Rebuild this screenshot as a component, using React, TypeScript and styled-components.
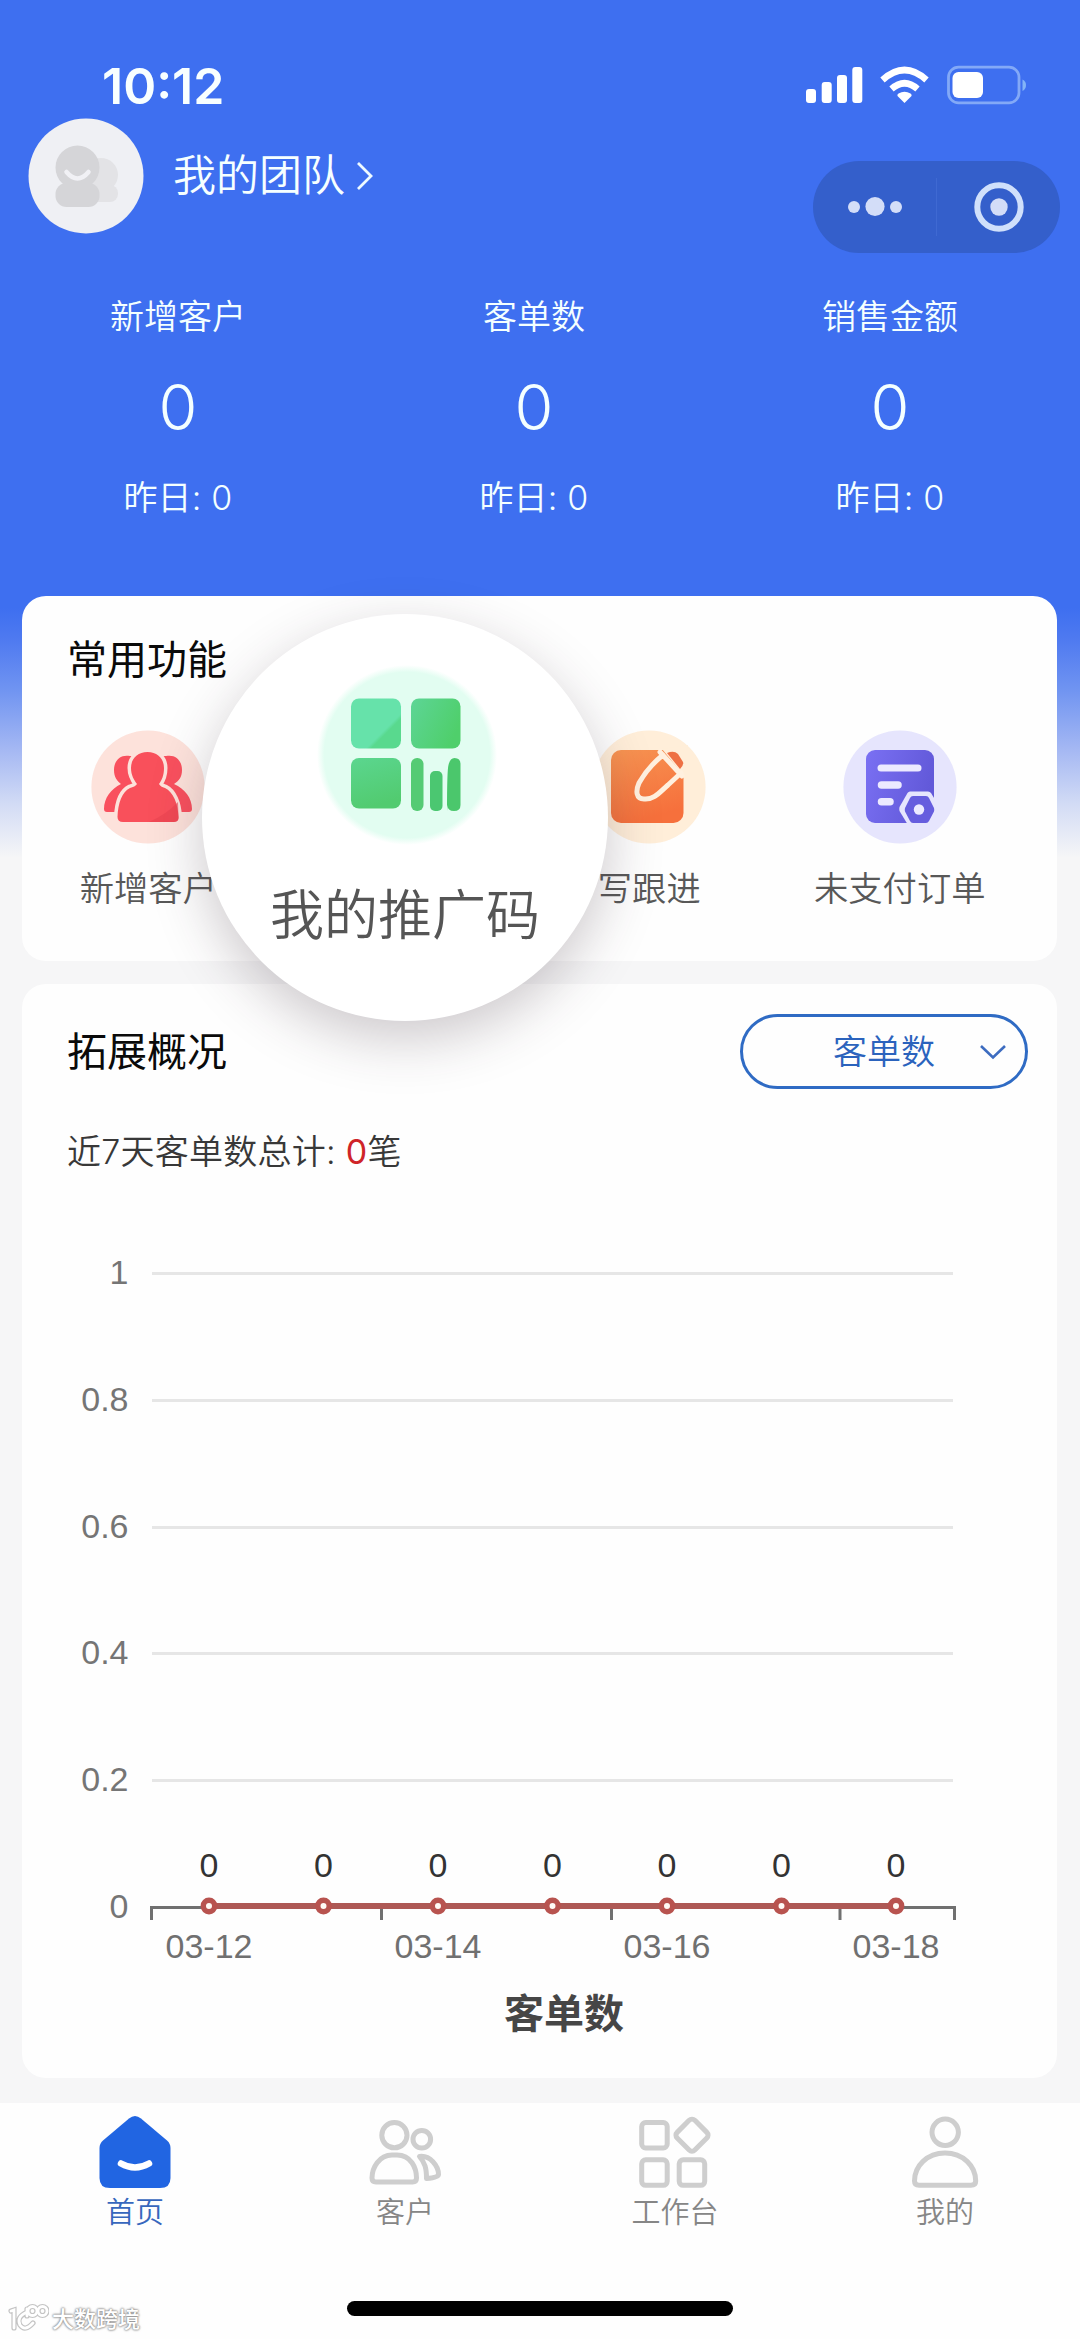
import React from "react";
import styled, { createGlobalStyle } from "styled-components";

const GlobalStyle = createGlobalStyle`
  * { box-sizing: border-box; }
  body {
    margin: 0;
    font-family: Inter, "Noto Sans CJK SC", sans-serif;
    -webkit-font-smoothing: antialiased;
  }
  svg { display: block; }
`;

const Page = styled.div`
  position: relative;
  display: flex;
  flex-direction: column;
  width: 1080px;
  height: 2339px;
  overflow: hidden;
  background: linear-gradient(
    to bottom,
    #3e6ff0 0,
    #3e6ff0 608px,
    #4f7af0 640px,
    #7094f1 690px,
    #a5b8f3 750px,
    #d3dcf5 805px,
    #f6f6f7 858px
  );
`;

const StatusBar = styled.div`
  display: flex;
  flex: none;
  justify-content: space-between;
  align-items: center;
  height: 118px;
  padding: 52px 54px 0 102px;
`;

const Clock = styled.span`
  padding-top: 2px;
  color: #f8ffff;
  font-size: 50px;
  font-weight: 600;
  line-height: 64px;
`;

const NavRow = styled.div`
  display: flex;
  flex: none;
  height: 161px;
  padding: 0 20px 0 28px;
`;

const TeamLink = styled.div`
  display: flex;
  align-items: center;
  height: 116px;
`;

const TeamName = styled.span`
  margin: 0 11px 2px 29px;
  color: #f6ffff;
  font-size: 43px;
  font-weight: 350;
  line-height: 60px;
`;

const Capsule = styled.div`
  display: flex;
  align-items: center;
  width: 247px;
  height: 92px;
  margin: 43px 0 0 auto;
  border-radius: 46px;
  background: #345fcb;
`;

const CapsuleButton = styled.div<{ $width: number }>`
  display: flex;
  justify-content: center;
  width: ${(p) => p.$width}px;
`;

const CapsuleDivider = styled.div`
  width: 1px;
  height: 58px;
  background: #3f69d2;
`;

const Stats = styled.div`
  display: grid;
  flex: none;
  grid-template-columns: repeat(3, 1fr);
  height: 317px;
  padding: 11px 12px 0 0;
  color: #f4ffff;
  text-align: center;
  font-weight: 350;
`;

const StatLabel = styled.div`
  font-size: 34px;
  line-height: 54px;
`;

const StatValue = styled.div`
  margin-top: 25px;
  font-size: 63px;
  line-height: 76px;
`;

const StatNote = styled.div`
  margin-top: 26px;
  font-size: 34px;
  line-height: 54px;
  letter-spacing: 0.2px;
  white-space: pre;
`;

const Card = styled.section<{ $height: number }>`
  position: relative;
  flex: none;
  width: 1035px;
  height: ${(p) => p.$height}px;
  margin: 0 0 23px 22px;
  border-radius: 24px;
  background: #fefefe;
`;

const CardTitle = styled.h2`
  margin: 0;
  color: #0a0a0a;
  font-size: 40px;
  font-weight: 400;
  line-height: 56px;
`;

const ShortcutHeader = styled.div`
  padding: 36px 0 0 45px;
`;

const Shortcuts = styled.div`
  display: grid;
  grid-template-columns: repeat(4, 250.5px);
  margin-top: 42px;
  padding-left: 1px;
`;

const Shortcut = styled.div`
  display: flex;
  flex-direction: column;
  align-items: center;
`;

const ShortcutLabel = styled.span`
  margin-top: 18px;
  color: #585858;
  font-size: 34.3px;
  font-weight: 350;
  line-height: 54px;
  white-space: nowrap;
`;

const Spotlight = styled.div`
  position: absolute;
  left: 180px;
  top: 18px;
  z-index: 2;
  display: flex;
  flex-direction: column;
  align-items: center;
  width: 406px;
  height: 407px;
  padding-top: 51px;
  border-radius: 50%;
  background: #fff;
  box-shadow: 0 18px 54px rgba(58, 44, 54, 0.25);
`;

const PromoIconSlot = styled.div`
  padding-left: 4px;
`;

const SpotlightLabel = styled.span`
  margin-top: 33px;
  color: #555;
  font-size: 54px;
  font-weight: 350;
  line-height: 76px;
`;

const OverviewHeader = styled.div`
  display: flex;
  justify-content: space-between;
  align-items: center;
  padding: 30px 29px 0 45px;
`;

const Select = styled.div`
  display: flex;
  align-items: center;
  justify-content: flex-end;
  width: 288px;
  height: 75px;
  padding-right: 18px;
  border: 3px solid #2f6bc4;
  border-radius: 38px;
  color: #2b63bd;
  font-size: 34px;
  font-weight: 350;
  line-height: 54px;
`;

const SelectText = styled.span`
  margin-right: 44px;
`;

const Summary = styled.p`
  margin: 36px 0 0 45px;
  color: #383838;
  font-size: 34px;
  font-weight: 350;
  line-height: 54px;
  letter-spacing: 0.25px;
`;

const SummaryValue = styled.b`
  color: #cf2428;
  font-weight: 400;
`;

const ChartSvg = styled.svg`
  margin-top: 42px;
`;

const TabBar = styled.nav`
  display: grid;
  grid-template-columns: repeat(4, 1fr);
  flex: none;
  height: 236px;
  margin-top: 2px;
  background: #fefefe;
`;

const Tab = styled.div<{ $active?: boolean }>`
  display: flex;
  flex-direction: column;
  align-items: center;
  gap: 2px;
  padding-top: 11px;
  color: ${(p) => (p.$active ? "#3767bd" : "#868686")};
  font-size: 29px;
  font-weight: 350;
  line-height: 42px;
`;

const HomeIndicator = styled.div`
  position: absolute;
  left: 347px;
  top: 2301px;
  width: 386px;
  height: 15px;
  border-radius: 8px;
  background: #000;
`;

const Watermark = styled.div`
  position: absolute;
  left: 8px;
  top: 2303px;
  display: flex;
  align-items: center;
  gap: 3px;
  height: 32px;
  color: #fff;
  font-size: 22px;
  font-weight: 500;
  line-height: 32px;
  text-shadow: 0 0 2px #888, 0 0 2px #999, 0 0 3px #aaa;
`;

const AvatarIcon = () => (
  <svg width="116" height="116" viewBox="0 0 116 116">
    <circle cx="58" cy="58" r="57.5" fill="#eff0f4" />
    <g fill="#e3e3e6">
      <circle cx="73" cy="57" r="17" />
      <rect x="50" y="67" width="40" height="17" rx="8" />
    </g>
    <g fill="#d5d5d8">
      <circle cx="49.500" cy="49.500" r="22" />
      <rect x="27.500" y="65" width="44" height="24" rx="11" />
    </g>
    <path d="M38.500 54Q49.500 67 60.500 54" fill="none" stroke="#f1f1f5" strokeWidth="4.500" strokeLinecap="round" />
  </svg>
);

const StatusIcons = () => (
  <svg width="222" height="42" viewBox="804 64 222 42">
    <g fill="#fff">
      <rect x="806" y="89" width="10" height="14" rx="3" />
      <rect x="821.700" y="82" width="10" height="21" rx="3" />
      <rect x="837" y="75" width="10" height="28" rx="3" />
      <rect x="852.300" y="67" width="10" height="36" rx="3" />
      <path d="M904.500 103L897.500 96Q896.800 94.800 898.500 93.500Q904.500 89.800 910.500 93.500Q912.200 94.800 911.500 96Z" />
    </g>
    <g fill="none" stroke="#fff" strokeWidth="6.500">
      <path d="M882.500 80Q904.500 60 926.500 80" />
      <path d="M891.500 89Q904.500 77.500 917.500 89" />
    </g>
    <rect x="948.500" y="67.200" width="70.500" height="35.600" rx="10" fill="none" stroke="#83a9f7" strokeWidth="2.800" />
    <rect x="952.500" y="72" width="30.500" height="26" rx="6" fill="#fff" />
    <path d="M1022.500 79.500Q1026 81 1026 85T1022.500 91Z" fill="#83b4f7" />
  </svg>
);

const ChevronRight = () => (
  <svg width="18" height="30" viewBox="0 0 18 30">
    <path d="M2 2L15 15L2 28" fill="none" stroke="#eefaff" strokeWidth="2.800" />
  </svg>
);

const DotsIcon = () => (
  <svg width="56" height="24" viewBox="0 0 56 24" fill="#d3ddf8">
    <circle cx="7" cy="12" r="6" />
    <circle cx="28" cy="11.500" r="9.600" />
    <circle cx="49" cy="12" r="6" />
  </svg>
);

const TargetIcon = () => (
  <svg width="52" height="52" viewBox="0 0 52 52">
    <circle cx="26" cy="26" r="21.700" fill="none" stroke="#d0e0fb" strokeWidth="6" />
    <circle cx="26" cy="26" r="8.700" fill="#d3ddf8" />
  </svg>
);

const PeopleIcon = () => (
  <svg width="114" height="114" viewBox="92 730 114 114">
    <circle cx="149" cy="787" r="56.600" fill="#fde2db" />
    <g fill="#f9505e">
      <path d="M131 756C121 754 115 761 115 770C115 777 118 781 122 784C112 789 105 798 105 809Q105 812 108 812H150V757Z" />
      <path d="M167 756C177 754 183 761 183 770C183 777 180 781 175 784C186 789 193 798 193 809Q193 812 190 812H148V757Z" />
    </g>
    <path
      d="M148.500 752C138 752 132 759 132 768C132 775 135 780 138 784C137 786 134 787 131 788C123 792 119 803 118.500 817Q118.500 822 124 822H175Q180 822 179.500 817C179 803 174 792 166 788C163 787 161 786 160 784C163 780 165 775 165 768C165 759 159 752 148.500 752Z"
      fill="#f9505b"
      stroke="#fde2db"
      strokeWidth="7"
      paintOrder="stroke"
    />
    <path d="M150 822Q168 814 179 802L179.500 817Q180 822 175 822Z" fill="#e94250" opacity="0.600" />
  </svg>
);

const NoteIcon = () => (
  <svg width="114" height="114" viewBox="594 730 114 114">
    <defs>
      <linearGradient id="note" x1="0" y1="0" x2="0.300" y2="1">
        <stop offset="0" stopColor="#f79452" />
        <stop offset="1" stopColor="#f6703c" />
      </linearGradient>
    </defs>
    <circle cx="651" cy="787" r="56.600" fill="#ffeed9" />
    <rect x="613" y="750" width="72.500" height="73" rx="10" fill="url(#note)" />
    <path d="M664 749L686 776L690 745Z" fill="#ffeed9" />
    <path d="M669 753Q676 750 680 754L685 762Q686 765 682 769Z" fill="#ee7044" />
    <path
      d="M665 755C655 763 646 774 641 783C637.500 791 638 799 646 799C656 800 662 792 670 785L683 773M662 752L684 776"
      fill="none"
      stroke="#fff0df"
      strokeWidth="5"
      strokeLinecap="round"
    />
  </svg>
);

const OrderIcon = () => (
  <svg width="114" height="114" viewBox="843 730 114 114">
    <defs>
      <linearGradient id="order" x1="0" y1="0" x2="1" y2="0.300">
        <stop offset="0" stopColor="#7a70f3" />
        <stop offset="1" stopColor="#6259d9" />
      </linearGradient>
    </defs>
    <circle cx="900" cy="787" r="56.600" fill="#e6e5fd" />
    <rect x="866" y="750" width="68" height="73" rx="9" fill="url(#order)" />
    <g stroke="#eceaff" strokeLinecap="round">
      <path d="M881 768H918" strokeWidth="7" />
      <path d="M881.500 785H898" strokeWidth="7.500" />
      <path d="M881.500 801.700H890" strokeWidth="7.500" />
    </g>
    <path
      d="M910 791.500H928Q930 791.500 931 793L939.500 807Q940 809 939.500 811L931 825H908L899.500 811Q899 809 899.500 807L907.500 793Q908.500 791.500 910 791.500Z"
      fill="#e6e5fd"
    />
    <path
      d="M913 796H926Q928 796 929 798L934 808Q934.500 810 934 811.500L929 821Q928 823 926 823H913Q911 823 910 821L905 811.500Q904.500 810 905 808L910 798Q911 796 913 796Z"
      fill="#665dde"
    />
    <circle cx="919" cy="809.500" r="5.200" fill="#eceaff" />
  </svg>
);

const PromoCodeIcon = () => (
  <svg width="180" height="180" viewBox="318 665 180 180">
    <defs>
      <linearGradient id="tileA" x1="0" y1="0" x2="1" y2="1">
        <stop offset="0.650" stopColor="#66e2aa" />
        <stop offset="0.700" stopColor="#59d98e" />
      </linearGradient>
      <linearGradient id="tileB" x1="0" y1="0" x2="1" y2="0.500">
        <stop offset="0" stopColor="#5dd596" />
        <stop offset="1" stopColor="#4fcf6b" />
      </linearGradient>
      <linearGradient id="tileC" x1="0" y1="0" x2="0.300" y2="1">
        <stop offset="0" stopColor="#5bd68f" />
        <stop offset="1" stopColor="#52cb70" />
      </linearGradient>
      <radialGradient id="halo">
        <stop offset="0.920" stopColor="#e2fdf1" />
        <stop offset="1" stopColor="#e2fdf1" stopOpacity="0" />
      </radialGradient>
    </defs>
    <circle cx="408" cy="755" r="90" fill="url(#halo)" />
    <rect x="352" y="698.500" width="50" height="50" rx="8" fill="url(#tileA)" />
    <rect x="412" y="698.500" width="49.500" height="50" rx="8" fill="url(#tileB)" />
    <rect x="352" y="758" width="50" height="50.500" rx="8" fill="url(#tileC)" />
    <rect x="412" y="758" width="12.500" height="53" rx="6" fill="#55cb74" />
    <rect x="431" y="771" width="12.500" height="40" rx="5" fill="#4bc771" />
    <path d="M448 811Q448 770 449.500 765Q451 758 455.500 758Q461.500 758 461.500 764V805Q461.500 811 455 811T448.500 805Z" fill="#4bc76c" />
  </svg>
);

const HomeIcon = () => (
  <svg width="76" height="76" viewBox="97 2114 76 76">
    <path
      d="M129 2118.500Q135 2113.500 141 2118.500L167 2140.500Q170.500 2143.500 170.500 2148V2178Q170.500 2188 160 2188H110Q99.500 2188 99.500 2178V2148Q99.500 2143.500 103 2140.500Z"
      fill="#2165e2"
    />
    <path d="M121 2163.500Q135 2171.500 149 2163.500" fill="none" stroke="#fff" strokeWidth="6.500" strokeLinecap="round" />
  </svg>
);

const CustomersIcon = () => (
  <svg width="76" height="76" viewBox="367 2114 76 76" fill="none" stroke="#cecece" strokeWidth="5" strokeLinejoin="round">
    <circle cx="394.400" cy="2135.200" r="12.600" />
    <circle cx="421.800" cy="2139.300" r="8.800" />
    <path d="M392 2155H397C411 2155 416.500 2168 416.500 2178Q416.500 2182 412.500 2182H376Q372 2182 372 2178C372 2168 379 2155 392 2155Z" />
    <path d="M419.500 2156.500C430 2155 438.500 2166 438.500 2174.500Q438.500 2177.500 426.500 2178.500C426.500 2168 425 2163 419.500 2156.500Z" />
  </svg>
);

const WorkbenchIcon = () => (
  <svg width="76" height="76" viewBox="637 2114 76 76" fill="none" stroke="#cecece" strokeWidth="5">
    <rect x="641.700" y="2122.500" width="25.500" height="25.500" rx="4" />
    <rect x="641.700" y="2159.800" width="25.500" height="25.500" rx="4" />
    <rect x="679.200" y="2159.800" width="25.500" height="25.500" rx="4" />
    <rect x="679.500" y="2122.700" width="25" height="25" rx="4" transform="rotate(45 692 2135.200)" />
  </svg>
);

const MeIcon = () => (
  <svg width="76" height="76" viewBox="907 2114 76 76" fill="none" stroke="#cecece" strokeWidth="5" strokeLinejoin="round">
    <circle cx="945.200" cy="2132.300" r="13.200" />
    <path d="M945 2153C963 2153 975.700 2166 975.700 2181Q975.700 2185.300 971 2185.300H919Q914.500 2185.300 914.500 2181C914.500 2166 927 2153 945 2153Z" />
  </svg>
);

const WatermarkLogo = () => (
  <svg width="41" height="32" viewBox="0 0 41 32" fill="none" strokeLinecap="round">
    {[
      { color: "#c4c4c4", width: 5.2 },
      { color: "#ffffff", width: 2.8 },
    ].map((s) => (
      <g key={s.color} stroke={s.color} strokeWidth={s.width}>
        <path d="M3 8L6 7V25M19 9Q8 14 12 22Q17 29 25 20M19 6V13" />
        <circle cx="24.500" cy="8" r="4.500" />
        <circle cx="34.500" cy="8" r="4.500" />
      </g>
    ))}
  </svg>
);

const stats = ["新增客户", "客单数", "销售金额"];

const shortcuts = [
  { label: "新增客户", icon: <PeopleIcon /> },
  null,
  { label: "写跟进", icon: <NoteIcon /> },
  { label: "未支付订单", icon: <OrderIcon /> },
];

const tabs = [
  { label: "首页", icon: <HomeIcon /> },
  { label: "客户", icon: <CustomersIcon /> },
  { label: "工作台", icon: <WorkbenchIcon /> },
  { label: "我的", icon: <MeIcon /> },
];

const yLabels = ["1", "0.8", "0.6", "0.4", "0.2", "0"];
const days = ["03-12", "03-13", "03-14", "03-15", "03-16", "03-17", "03-18"];
const rowY = (i: number) => 52 + i * 126.8;
const dayX = (i: number) => 187 + i * 114.5;

const Chart = () => (
  <ChartSvg width="1035" height="856" viewBox="0 0 1035 856" fontFamily='"Liberation Sans", "Noto Sans CJK SC", sans-serif' fontSize="34">
    {yLabels.map((label, i) => (
      <g key={label}>
        <text x="106.500" y={rowY(i) + 11} textAnchor="end" fill="#757575">
          {label}
        </text>
        {i < 5 && <rect x="130" y={Math.round(rowY(i)) - 1} width="801" height="3" fill="#e6e6e6" />}
      </g>
    ))}
    <path d="M128 686.500H934" stroke="#707070" strokeWidth="3" />
    {[129.5, 359.5, 589.5, 818, 932.5].map((x) => (
      <path key={x} d={`M${x} 686V699`} stroke="#707070" strokeWidth="3" />
    ))}
    <path d="M187 685H874" stroke="#ae5955" strokeWidth="6" />
    {days.map((day, i) => (
      <g key={day}>
        <circle cx={dayX(i)} cy="685" r="5.700" fill="#fffaf5" stroke="#b8534f" strokeWidth="5.400" />
        <text x={dayX(i)} y="656" textAnchor="middle" fill="#333">
          0
        </text>
        {i % 2 === 0 && (
          <text x={dayX(i)} y="737" textAnchor="middle" fill="#707070">
            {day}
          </text>
        )}
      </g>
    ))}
    <text x="542" y="807" textAnchor="middle" fontSize="40" fontWeight="700" fill="#464646">
      客单数
    </text>
  </ChartSvg>
);

export default function App() {
  return (
    <Page>
      <GlobalStyle />
      <StatusBar>
        <Clock>10:12</Clock>
        <StatusIcons />
      </StatusBar>
      <NavRow>
        <TeamLink>
          <AvatarIcon />
          <TeamName>我的团队</TeamName>
          <ChevronRight />
        </TeamLink>
        <Capsule>
          <CapsuleButton $width={123}>
            <DotsIcon />
          </CapsuleButton>
          <CapsuleDivider />
          <CapsuleButton $width={123}>
            <TargetIcon />
          </CapsuleButton>
        </Capsule>
      </NavRow>
      <Stats>
        {stats.map((label) => (
          <div key={label}>
            <StatLabel>{label}</StatLabel>
            <StatValue>0</StatValue>
            <StatNote>昨日: 0</StatNote>
          </div>
        ))}
      </Stats>
      <Card $height={365}>
        <ShortcutHeader>
          <CardTitle>常用功能</CardTitle>
        </ShortcutHeader>
        <Shortcuts>
          {shortcuts.map((s, i) => (
            <Shortcut key={i}>
              {s && s.icon}
              {s && <ShortcutLabel>{s.label}</ShortcutLabel>}
            </Shortcut>
          ))}
        </Shortcuts>
        <Spotlight>
          <PromoIconSlot>
            <PromoCodeIcon />
          </PromoIconSlot>
          <SpotlightLabel>我的推广码</SpotlightLabel>
        </Spotlight>
      </Card>
      <Card $height={1094}>
        <OverviewHeader>
          <CardTitle>拓展概况</CardTitle>
          <Select>
            <SelectText>客单数</SelectText>
            <svg width="28" height="18" viewBox="0 0 28 18">
              <path d="M2 3L14 14.500L26 3" fill="none" stroke="#3d6cc0" strokeWidth="2.600" />
            </svg>
          </Select>
        </OverviewHeader>
        <Summary>
          近7天客单数总计: <SummaryValue>0</SummaryValue>笔
        </Summary>
        <Chart />
      </Card>
      <TabBar>
        {tabs.map((tab, i) => (
          <Tab key={tab.label} $active={i === 0}>
            {tab.icon}
            {tab.label}
          </Tab>
        ))}
      </TabBar>
      <HomeIndicator />
      <Watermark>
        <WatermarkLogo />
        大数跨境
      </Watermark>
    </Page>
  );
}
